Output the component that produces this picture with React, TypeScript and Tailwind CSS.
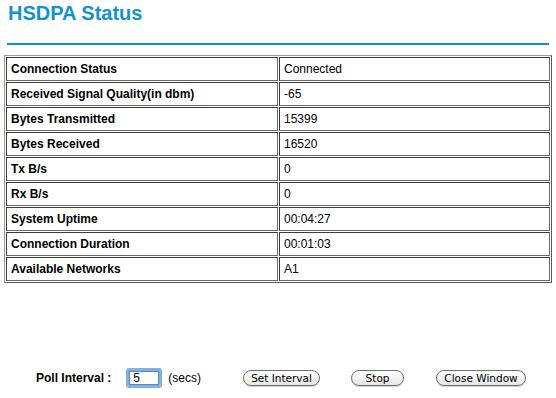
const rows: [string, string][] = [
  ["Connection Status", "Connected"],
  ["Received Signal Quality(in dbm)", "-65"],
  ["Bytes Transmitted", "15399"],
  ["Bytes Received", "16520"],
  ["Tx B/s", "0"],
  ["Rx B/s", "0"],
  ["System Uptime", "00:04:27"],
  ["Connection Duration", "00:01:03"],
  ["Available Networks", "A1"],
];

const cell =
  "h-[24px] p-0 pl-[4px] border border-t-[#3c3c3c] border-l-[#3c3c3c] border-r-[#6a6a6a] border-b-[#6a6a6a] align-middle";

function MacButton({ label, width }: { label: string; width: string }) {
  return (
    <button
      className={`${width} h-[16px] rounded-full border border-[#6f6f6f] bg-gradient-to-b from-white to-[#e6e6e6] text-[10.5px] leading-none text-black font-['DejaVu_Sans',sans-serif] shadow-[0_1px_0_#d0d0d0]`}
    >
      {label}
    </button>
  );
}

export default function App() {
  return (
    <div className="w-[556px] h-[398px] bg-white font-['Liberation_Sans',Arial,sans-serif] text-black">
      <h1 className="pl-[8px] pt-[1px] text-[20px] leading-[24px] font-bold text-[#1193cf]">HSDPA Status</h1>

      <div className="ml-[7px] mt-[18px] w-[542px] h-[2px] bg-[#0b95cc]" />

      <table className="ml-[4px] mt-[10px] w-[548px] border-separate border-spacing-[1px] border border-t-[#9a9a9a] border-l-[#9a9a9a] border-r-[#5a5a5a] border-b-[#5a5a5a] text-[12px]">
        <tbody>
          {rows.map(([label, value]) => (
            <tr key={label}>
              <td className={`${cell} w-[272px] font-bold`}>{label}</td>
              <td className={cell}>{value}</td>
            </tr>
          ))}
        </tbody>
      </table>

      <div className="mt-[85px] flex items-center text-[12px]">
        <span className="ml-[36px] font-bold">Poll Interval :</span>
        <div className="ml-[15px] w-[36px] h-[20px] rounded-[3px] border-[3px] border-[#7fb2e3] bg-white flex items-center">
          <input
            defaultValue="5"
            className="w-full h-full pl-[3px] text-[12px] border border-[#5a88c0] outline-none bg-white"
          />
        </div>
        <span className="ml-[6px]">(secs)</span>
        <div className="ml-[42px]">
          <MacButton label="Set Interval" width="w-[77px]" />
        </div>
        <div className="ml-[31px]">
          <MacButton label="Stop" width="w-[53px]" />
        </div>
        <div className="ml-[32px]">
          <MacButton label="Close Window" width="w-[90px]" />
        </div>
      </div>
    </div>
  );
}
